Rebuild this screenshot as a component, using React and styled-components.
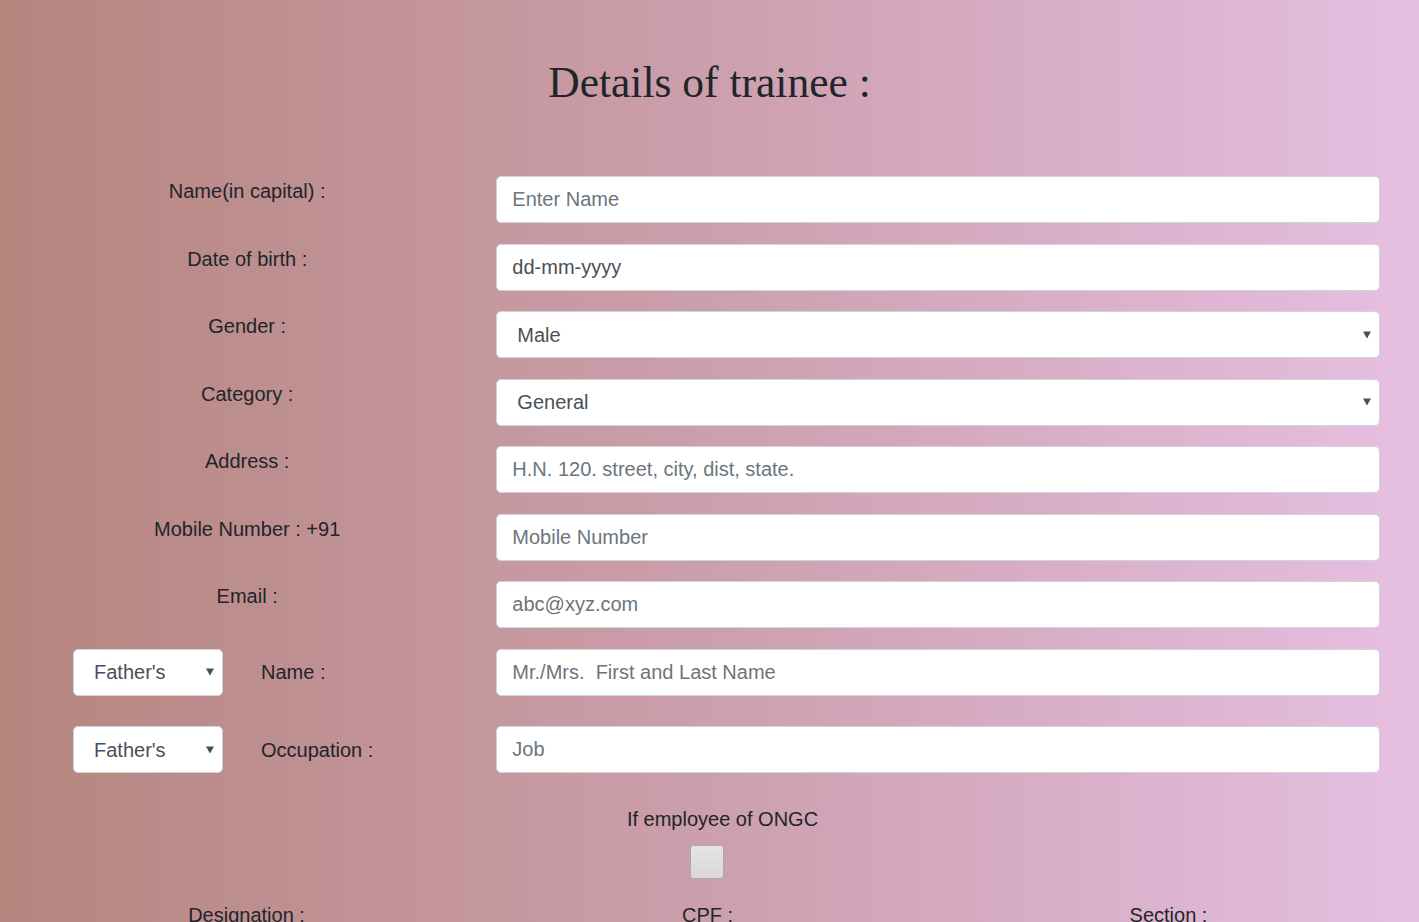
import React from "react";
import styled, { createGlobalStyle } from "styled-components";

const GlobalStyle = createGlobalStyle`
  html {
    min-height: 100%;
    background: linear-gradient(to right, #b5857e 0%, #cc9fad 50%, #e6bfe2 100%);
  }
  body {
    margin: 0;
    font-family: "Liberation Sans", Arial, sans-serif;
    color: #212529;
  }
  * { box-sizing: border-box; }
`;

const Page = styled.div`
  padding: 0 16px 40px;
`;

const Title = styled.h1`
  margin: 0;
  padding-top: 56px;
  height: 176px;
  text-align: center;
  font-family: "Liberation Serif", Georgia, serif;
  font-weight: 400;
  font-size: 43.5px;
  line-height: 52px;
  color: #212529;
`;

const Form = styled.form`
  display: flex;
  flex-direction: column;
  gap: 20.5px;
`;

const Row = styled.div`
  display: grid;
  grid-template-columns: 1fr 2fr;
  align-items: ${(p) => (p.$center ? "center" : "start")};
  margin-top: ${(p) => p.$extra || 0}px;
`;

const Label = styled.label`
  font-size: 20px;
  line-height: 30px;
  text-align: center;
`;

const Field = styled.div`
  padding: 0 23px 0 18px;
`;

const Input = styled.input`
  display: block;
  width: 100%;
  height: 47px;
  padding: 8px 15px;
  font-family: "Liberation Sans", Arial, sans-serif;
  font-size: 20px;
  color: #495057;
  background: #fff;
  border: 1px solid #ced4da;
  border-radius: 5px;
  outline: none;

  &::placeholder {
    color: ${(p) => (p.$dark ? "#495057" : "#6c757d")};
    opacity: 1;
  }
`;

const SelectWrap = styled.div`
  position: relative;
  width: ${(p) => p.$width || "100%"};
`;

const Select = styled.select`
  display: block;
  width: 100%;
  height: 47px;
  padding: 0 30px 0 ${(p) => p.$pad || 20}px;
  font-family: "Liberation Sans", Arial, sans-serif;
  font-size: 20px;
  color: #495057;
  background: #fff;
  border: 1px solid #ced4da;
  border-radius: 5px;
  appearance: none;
  outline: none;
`;

const Caret = styled.span`
  position: absolute;
  right: 9px;
  top: 50%;
  transform: translateY(-50%);
  width: 0;
  height: 0;
  border-left: 4px solid transparent;
  border-right: 4px solid transparent;
  border-top: 7px solid #4a4d52;
  pointer-events: none;
`;

const Relation = styled.div`
  display: flex;
  align-items: center;
  padding-left: 57px;
  gap: 38px;
`;

const SideLabel = styled.span`
  font-size: 20px;
  line-height: 30px;
`;

const Employee = styled.div`
  display: flex;
  flex-direction: column;
  align-items: center;
  margin-top: 10px;
  padding-right: 6px;
  gap: 11px;
`;

const EmployeeText = styled.div`
  font-size: 20px;
  line-height: 30px;
  padding-left: 32px;
`;

const CheckBox = styled.input`
  appearance: none;
  width: 34px;
  height: 34px;
  margin: 0;
  background: linear-gradient(#e4e4e4, #d8d8d8);
  border: 1px solid #a9a9a9;
  border-radius: 3px;
`;

const Triple = styled.div`
  display: grid;
  grid-template-columns: 1fr 1fr 1fr;
  margin-top: 1px;
  padding-right: 4px;
`;

const TripleLabel = styled.div`
  font-size: 20px;
  line-height: 30px;
  text-align: center;
`;

const Dropdown = ({ options, width, pad }) => (
  <SelectWrap $width={width}>
    <Select $pad={pad}>
      {options.map((o) => (
        <option key={o}>{o}</option>
      ))}
    </Select>
    <Caret />
  </SelectWrap>
);

const fields = [
  { label: "Name(in capital) :", placeholder: "Enter Name" },
  { label: "Date of birth :", placeholder: "dd-mm-yyyy", dark: true },
  { label: "Gender :", options: ["Male", "Female", "Other"] },
  { label: "Category :", options: ["General", "OBC", "SC", "ST"] },
  { label: "Address :", placeholder: "H.N. 120. street, city, dist, state." },
  { label: "Mobile Number : +91", placeholder: "Mobile Number" },
  { label: "Email :", placeholder: "abc@xyz.com" },
];

export default function App() {
  return (
    <Page>
      <GlobalStyle />
      <Title>Details of trainee :</Title>
      <Form>
        {fields.map((f) => (
          <Row key={f.label}>
            <Label>{f.label}</Label>
            <Field>
              {f.options ? (
                <Dropdown options={f.options} />
              ) : (
                <Input type="text" placeholder={f.placeholder} $dark={f.dark} />
              )}
            </Field>
          </Row>
        ))}
        <Row $center>
          <Relation>
            <Dropdown options={["Father's", "Mother's", "Guardian's"]} width="150px" />
            <SideLabel>Name :</SideLabel>
          </Relation>
          <Field>
            <Input type="text" placeholder="Mr./Mrs.  First and Last Name" />
          </Field>
        </Row>
        <Row $center $extra={10}>
          <Relation>
            <Dropdown options={["Father's", "Mother's", "Guardian's"]} width="150px" />
            <SideLabel>Occupation :</SideLabel>
          </Relation>
          <Field>
            <Input type="text" placeholder="Job" />
          </Field>
        </Row>
        <Employee>
          <EmployeeText>If employee of ONGC</EmployeeText>
          <CheckBox type="checkbox" />
        </Employee>
        <Triple>
          <TripleLabel>Designation :</TripleLabel>
          <TripleLabel>CPF :</TripleLabel>
          <TripleLabel>Section :</TripleLabel>
        </Triple>
      </Form>
    </Page>
  );
}
